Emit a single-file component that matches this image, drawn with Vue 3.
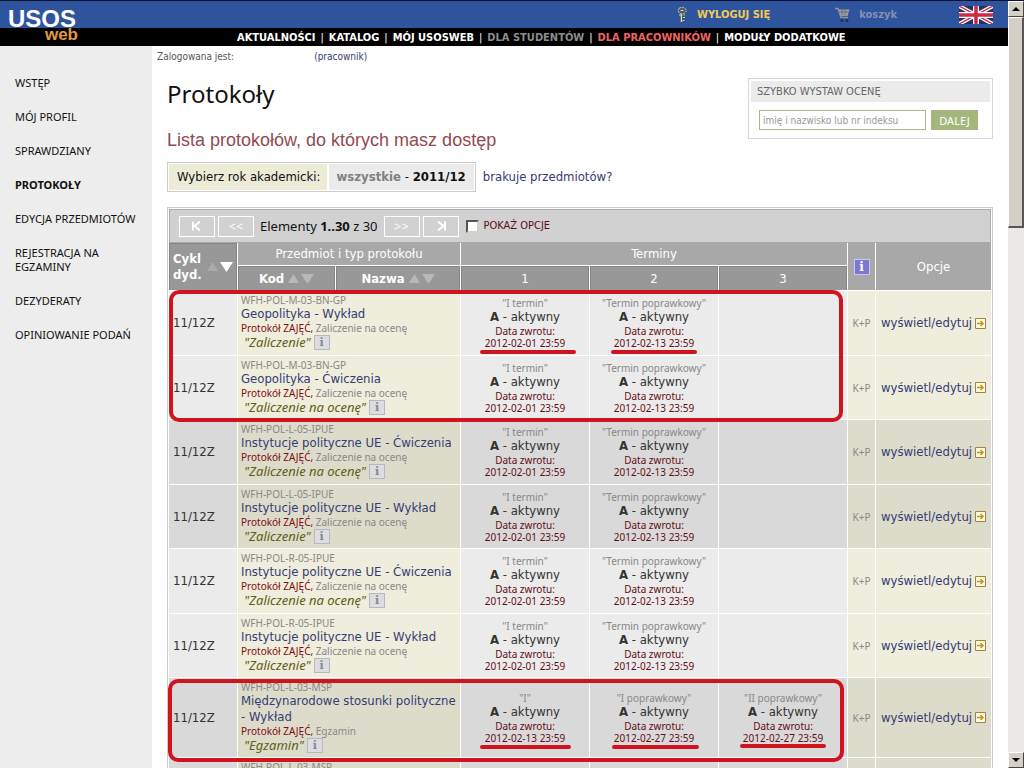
<script setup>
const sideMenu = ['WSTĘP', 'MÓJ PROFIL', 'SPRAWDZIANY', 'PROTOKOŁY', 'EDYCJA PRZEDMIOTÓW', 'REJESTRACJA NA EGZAMINY', 'DEZYDERATY', 'OPINIOWANIE PODAŃ']
const topMenu = [
  { text: 'AKTUALNOŚCI' },
  { text: 'KATALOG' },
  { text: 'MÓJ USOSWEB' },
  { text: 'DLA STUDENTÓW', cls: 'muted' },
  { text: 'DLA PRACOWNIKÓW', cls: 'current' },
  { text: 'MODUŁY DODATKOWE' },
]
const regular = [
  { name: 'I termin', date: '2012-02-01 23:59' },
  { name: 'Termin poprawkowy', date: '2012-02-13 23:59' },
  null,
]
const exam = [
  { name: 'I', date: '2012-02-13 23:59' },
  { name: 'I poprawkowy', date: '2012-02-27 23:59' },
  { name: 'II poprawkowy', date: '2012-02-27 23:59' },
]
const grade = 'Zaliczenie na ocenę'
const rows = [
  { code: 'WFH-POL-M-03-BN-GP', name: 'Geopolityka - Wykład', kind: grade, proto: 'Zaliczenie', terms: regular },
  { code: 'WFH-POL-M-03-BN-GP', name: 'Geopolityka - Ćwiczenia', kind: grade, proto: grade, terms: regular },
  { code: 'WFH-POL-L-05-IPUE', name: 'Instytucje polityczne UE - Ćwiczenia', kind: grade, proto: grade, terms: regular, dark: true },
  { code: 'WFH-POL-L-05-IPUE', name: 'Instytucje polityczne UE - Wykład', kind: grade, proto: 'Zaliczenie', terms: regular, dark: true },
  { code: 'WFH-POL-R-05-IPUE', name: 'Instytucje polityczne UE - Ćwiczenia', kind: grade, proto: grade, terms: regular },
  { code: 'WFH-POL-R-05-IPUE', name: 'Instytucje polityczne UE - Wykład', kind: grade, proto: 'Zaliczenie', terms: regular },
  { code: 'WFH-POL-L-03-MSP', name: 'Międzynarodowe stosunki polityczne - Wykład', kind: 'Egzamin', proto: 'Egzamin', terms: exam, dark: true },
  { code: 'WFH-POL-L-03-MSP', dark: true },
]
</script>

<template>
  <div class="window">
    <div class="page">
      <header>
        <div class="blue">
          <a class="key" href="#"><svg width="14" height="17" viewBox="0 0 14 17" aria-hidden="true"><path d="M4 2.500Q7 0 10 2.500T9.500 7L7.500 8.500 4.500 7Q2 4.500 4 2.500z" fill="#4d5c78" stroke="#d8d49c" stroke-dasharray="2 1" /><path d="M5.500 4.500h3M4 9h6" stroke="#d8d49c" /><path d="M6.500 8v8" stroke="#e0dca0" stroke-width="1.500" /><path d="M8 8v7" stroke="#3b4048" /><path d="M8 11.500h2M7.500 14.500h2" stroke="#d8d49c" /></svg><span>WYLOGUJ SIĘ</span></a>
          <a class="basket" href="#"><svg width="16" height="16" viewBox="0 0 16 16" aria-hidden="true"><path d="M0 1.500h3l3 9h7" fill="none" stroke="#8d929c" stroke-width="1.400" /><path d="M3.500 2.500h11l-2 6.500h-7z" fill="#9ba0a8" /><path d="M4 5h10M7 2.500v6M10 2.500v6" stroke="#686e7a" /><circle cx="7" cy="13.500" r="1.500" fill="#27304a" /><circle cx="12" cy="13.500" r="1.500" fill="#27304a" /></svg><span>koszyk</span></a>
          <a class="flag" href="#" aria-label="English"><svg width="34" height="18" viewBox="0 0 34 18" aria-hidden="true"><path fill="#26305f" d="M0 0h34v18H0z" /><path d="M0 0l34 18M34 0L0 18" stroke="#fff" stroke-width="4" /><path d="M0 0l34 18M34 0L0 18" stroke="#c8324a" stroke-width="1.500" /><path d="M17 0v18M0 9h34" stroke="#fff" stroke-width="6" /><path d="M17 0v18M0 9h34" stroke="#d02840" stroke-width="3.500" /></svg></a>
        </div>
        <nav class="black">
          <template v-for="(m, i) in topMenu" :key="m.text"><span v-if="i" class="sep">|</span><a href="#" :class="m.cls">{{ m.text }}</a></template>
        </nav>
        <a class="logo" href="#"><b>USOS</b><span>web</span></a>
      </header>
      <div class="body">
        <nav class="side">
          <a v-for="s in sideMenu" :key="s" href="#" :class="{ active: s === 'PROTOKOŁY' }">{{ s }}</a>
        </nav>
        <main>
          <p class="login"><span>Zalogowana jest:</span><a href="#">(pracownik)</a></p>
          <div class="intro">
            <div>
              <h1>Protokoły</h1>
              <h2>Lista protokołów, do których masz dostęp</h2>
            </div>
            <form class="quick" @submit.prevent>
              <label for="student">SZYBKO WYSTAW OCENĘ</label>
              <div><input id="student" type="text" placeholder="imię i nazwisko lub nr indeksu"><button>DALEJ</button></div>
            </form>
          </div>
          <div class="years">
            <div class="yearbox"><span class="pick">Wybierz rok akademicki:</span><span class="opts"><a href="#">wszystkie</a> - <b>2011/12</b></span></div>
            <a class="missing" href="#">brakuje przedmiotów?</a>
          </div>
          <div class="list">
            <div class="tools">
              <button aria-label="Pierwsza strona"><svg width="12" height="12" viewBox="0 0 12 12"><path d="M2 1.500v9M9 1.500L3.500 6 9 10.500" /></svg></button>
              <button>&lt;&lt;</button>
              <span class="count">Elementy <b>1..30</b> z 30</span>
              <button>&gt;&gt;</button>
              <button aria-label="Ostatnia strona"><svg width="12" height="12" viewBox="0 0 12 12"><path d="M10 1.500v9M3 1.500L8.500 6 3 10.500" /></svg></button>
              <input id="opts" type="checkbox"><label for="opts">POKAŻ OPCJE</label>
            </div>
            <table>
              <colgroup><col class="c-cycle"><col class="c-code"><col class="c-name"><col class="c-term"><col class="c-term"><col class="c-term"><col class="c-info"><col></colgroup>
              <thead>
                <tr class="h1">
                  <th rowspan="2" class="deep"><div class="sorted cyc"><span>Cykl dyd.</span><svg width="27" height="12" viewBox="0 0 27 12"><path fill="#aaa" d="M1 10l5.500-9L12 10z" /><path fill="#fff" d="M14 1h13l-6.500 10z" /></svg></div></th>
                  <th colspan="2" class="plain">Przedmiot i typ protokołu</th>
                  <th colspan="3" class="plain">Terminy</th>
                  <th rowspan="2" class="plain"><span class="bluei">i</span></th>
                  <th rowspan="2" class="plain">Opcje</th>
                </tr>
                <tr class="h2">
                  <th v-for="n in ['Kod', 'Nazwa']" :key="n" class="deep"><div class="sorted"><span>{{ n }}</span><svg width="27" height="12" viewBox="0 0 27 12"><path fill="#b8b8b8" d="M1 10l5.500-9L12 10z" /><path fill="#b8b8b8" d="M14 1h13l-6.500 10z" /></svg></div></th>
                  <th v-for="n in 3" :key="n" class="deep thin">{{ n }}</th>
                </tr>
              </thead>
              <tbody>
                <tr v-for="(r, i) in rows" :key="i" :class="{ dark: r.dark }">
                  <td class="cycle"><template v-if="r.name">11/12Z</template></td>
                  <td colspan="2" class="subject cream">
                    <div class="code">{{ r.code }}</div>
                    <template v-if="r.name">
                      <a class="name" href="#">{{ r.name }}</a>
                      <div class="kind"><span>Protokół ZAJĘĆ,</span> {{ r.kind }}</div>
                      <div class="proto"><i>"{{ r.proto }}"</i><button class="info" aria-label="Informacje">i</button></div>
                    </template>
                  </td>
                  <td v-for="k in 3" :key="k" class="term">
                    <template v-if="r.terms && r.terms[k - 1]">
                      <div class="tname">"{{ r.terms[k - 1].name }}"</div>
                      <div class="state"><b>A</b> - aktywny</div>
                      <div class="date">Data zwrotu:<br>{{ r.terms[k - 1].date }}</div>
                    </template>
                  </td>
                  <td class="kp cream"><template v-if="r.name">K+P</template></td>
                  <td class="cream edit"><a v-if="r.name" href="#"><span>wyświetl/edytuj</span><svg width="11" height="11" viewBox="0 0 11 11"><path d="M.5.5h10v10H.5z" fill="#fffbe2" stroke="#9c8540" /><path d="M2 5.500h6M5.500 3L8 5.500 5.500 8" fill="none" stroke="#c69218" stroke-width="1.500" /></svg></a></td>
                </tr>
              </tbody>
            </table>
            <svg class="marks" width="826" height="562" viewBox="0 0 826 562" aria-hidden="true">
              <rect x="4" y="85" width="670" height="128" rx="8" />
              <rect x="3" y="474" width="672" height="79" rx="8" />
              <path d="M315 145h92M446 145h82M315 540h87M447 540h83M575 539h82" />
            </svg>
          </div>
        </main>
      </div>
    </div>
    <div class="scroll" aria-hidden="true">
      <span class="knob"><svg width="8" height="4" viewBox="0 0 8 4"><path d="M0 4l4-4 4 4z" /></svg></span>
      <span class="thumb"></span>
      <span class="knob end"><svg width="8" height="4" viewBox="0 0 8 4"><path d="M0 0h8L4 4z" /></svg></span>
    </div>
  </div>
</template>

<style>
html, body { height: 100%; overflow: hidden; }
</style>
<style scoped>
.window { display: flex; height: 100vh; overflow: hidden; background: #fff; font: 13px/16px "DejaVu Sans Condensed", "DejaVu Sans", sans-serif; color: #333; }
.window * { box-sizing: border-box; }
.page { flex: 1; min-width: 0; display: flex; flex-direction: column; overflow: hidden; }
a { color: #343c74; text-decoration: none; }
button { font-family: "Noto Sans", sans-serif; padding: 0; cursor: pointer; }
header { position: relative; flex: none; }
.blue { display: flex; justify-content: flex-end; align-items: center; height: 28px; padding-right: 15px; background: #2f549e; border-top: 1px solid #0b1233; }
.blue a { display: flex; align-items: center; font: bold 11px/14px "DejaVu Sans Condensed", sans-serif; }
.key { gap: 8px; margin-right: 65px; }
.basket { gap: 8px; margin-right: 62px; }
.blue a.key { color: #f2cb52; }
.blue a.basket { color: #8290b4; }
.black { display: flex; gap: 5px; height: 18px; padding-left: 237px; background: #000; font: bold 11px/19px "DejaVu Sans Condensed", sans-serif; white-space: nowrap; }
.black a, .sep { color: #fff; }
.sep { font-weight: normal; }
.black a.muted { color: #8c8c8c; }
.black a.current { color: #f06464; }
.logo { position: absolute; left: 8px; top: 7px; width: 70px; font-family: "Liberation Sans", sans-serif; }
.logo b { display: block; color: #fff; font-size: 24px; line-height: 23px; }
.logo span { display: block; color: #e29a42; font-weight: bold; font-size: 17px; line-height: 9px; text-align: right; }
.body { flex: 1; display: flex; min-height: 0; }
.side { flex: none; width: 152px; padding: 30px 15px; background: #ededed; display: flex; flex-direction: column; gap: 20px; }
.side a { color: #111; font: 11px/14px "Noto Sans", sans-serif; }
.side a.active { font-weight: bold; }
main { flex: 1; min-width: 0; padding: 0 15px; }
.login { display: flex; gap: 80px; margin: 4px 0 0 -10px; font-size: 10px; line-height: 14px; color: #555; }
.intro { display: flex; justify-content: space-between; align-items: flex-start; }
h1 { margin: 14px 0 0; font: 24px/32px "Noto Sans", sans-serif; color: #111; }
h2 { margin: 18px 0 0; font: 18px/24px "Liberation Sans", sans-serif; color: #934a50; }
.quick { width: 245px; margin-top: 14px; border: 1px solid #d5d5de; padding: 2px 2px 8px; font-size: 11px; color: #666; }
.quick label { display: block; padding: 0 6px; line-height: 21px; background: #ebebeb; }
.quick div { display: flex; gap: 5px; padding: 8px 0 0 8px; }
.quick input { width: 167px; height: 20px; padding: 0 3px; border: 1px solid #a9b68a; font: 10px "DejaVu Sans Condensed", sans-serif; }
.quick input::placeholder { color: #999; opacity: 1; }
.quick button { width: 47px; height: 20px; border: 0; background: #a3b77d; color: #fff; font-size: 11px; }
.years { display: flex; align-items: center; gap: 7px; margin-top: 10px; }
.yearbox { display: flex; border: 1px solid #ccc; padding: 1px; line-height: 26px; background: #fff; }
.pick { padding: 0 6px 0 8px; background: #ebebd6; color: #111; }
.opts { margin-left: 2px; padding: 0 8px; background: #ebebeb; color: #111; }
.opts a { color: #808080; font-weight: bold; }
.list { position: relative; margin-top: 15px; border: 1px solid #ccc; }
.tools { display: flex; align-items: center; height: 34px; margin: 1px 1px 0; padding: 0 9px; border: 1px solid #aaa; background: #d1d1d1; font-family: "Noto Sans", sans-serif; }
.tools button { width: 36px; height: 21px; border: 1px solid #fff; background: transparent; color: #fff; font-size: 13px; line-height: 16px; margin-right: 3px; }
.tools button svg { display: block; margin: 0 auto; fill: none; stroke: #fff; stroke-width: 2; }
.count { margin: 0 6px 0 3px; color: #111; white-space: nowrap; }
.tools input { appearance: none; width: 13px; height: 13px; margin: 0 5px 0 4px; background: #fff; border: 2px solid #d4d0c8; border-top-color: #555; border-left-color: #555; }
.tools label { color: #5c0d16; font: 11px/16px "DejaVu Sans Condensed", sans-serif; }
table { width: 100%; table-layout: fixed; border-collapse: separate; border-spacing: 1px; margin-top: -1px; }
.c-cycle { width: 68px; }
.c-code { width: 97px; }
.c-name { width: 124px; }
.c-term { width: 128px; }
.c-info { width: 27px; }
th { padding: 0; color: #fff; font-size: 13px; }
.h1 { height: 22px; }
.h2 { height: 24px; }
.plain { background: #a8a8a8; font-weight: normal; }
.deep { background: #989898; border: 1px solid #858585; border-bottom: 0; }
.thin { font-weight: normal; }
.sorted { display: flex; justify-content: center; align-items: center; gap: 3px; }
.sorted svg { flex: none; }
.sorted.cyc { text-align: left; }
.cyc span { width: 30px; }
.bluei { display: block; width: 16px; margin: 0 auto; background: #7b78d0; border: 1px solid #c9c8ee; font: bold 12px/14px "DejaVu Serif", serif; }
td { padding: 0; background: #ebebeb; vertical-align: middle; }
td.cream { background: #efeddc; }
.dark td { background: #d9d9d9; }
.dark td.cream { background: #dddccb; }
tbody tr { height: 64px; }
tbody tr:nth-child(even) { height: 63px; }
td.cycle { padding-left: 4px; }
.subject { padding: 4px 3px; vertical-align: top; }
.code, .kind, .tname, .date, .kp { font-family: "Noto Sans", sans-serif; font-size: 10px; color: #888; }
.code { line-height: 11px; }
.name { display: block; line-height: 16px; }
.kind { line-height: 13px; }
.kind span { color: #800d12; }
.proto { display: flex; align-items: center; gap: 3px; padding-left: 3px; font-family: "Noto Sans", sans-serif; line-height: 15px; color: #606012; }
.info { width: 16px; height: 15px; border: 1px solid #b8b8c4; background: #dcdce2; color: #888; font: bold 11px/12px "DejaVu Serif", serif; }
.term { text-align: center; }
.tname { line-height: 12px; }
.state { line-height: 16px; }
.term .date { color: #640d16; line-height: 12px; }
.kp { text-align: center; }
.edit a { display: flex; align-items: center; justify-content: center; gap: 3px; }
.marks { position: absolute; left: -1px; top: -1px; fill: none; stroke: #cf141e; stroke-width: 4; stroke-linecap: round; pointer-events: none; }
.scroll { flex: none; width: 16px; display: flex; flex-direction: column; background: #e9e8e4; border-top: 1px solid #0b1233; }
.knob { display: flex; align-items: center; justify-content: center; height: 16px; background: #d4d0c8; border: 1px solid #fff; border-right-color: #444; border-bottom-color: #444; }
.thumb { height: 211px; background: #d4d0c8; border: 1px solid #fff; border-right: 2px solid #555; border-bottom: 2px solid #555; }
.end { margin-top: auto; }
</style>
